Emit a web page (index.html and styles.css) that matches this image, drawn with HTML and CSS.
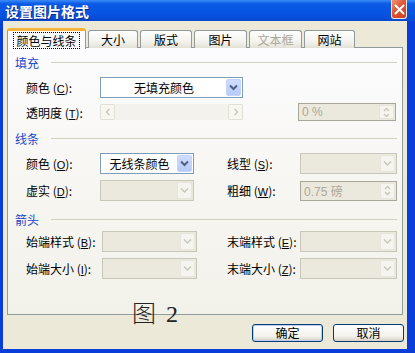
FILE: index.html
```html
<!DOCTYPE html>
<html lang="zh-CN">
<head>
    <meta charset="UTF-8">
    <title>设置图片格式</title>
    <link rel="stylesheet" href="styles.css">
</head>
<body>
    <div class="window">
        <div class="titlebar">
            <span class="title">设置图片格式</span>
            <span class="close-btn">
                <svg width="11" height="11" viewBox="0 0 11 11"><path d="M1.5 1.5 L9.5 9.5 M9.5 1.5 L1.5 9.5" stroke="#fff" stroke-width="2" stroke-linecap="round"/></svg>
            </span>
        </div>

        <div class="dialog">
            <div class="tabs">
                <div class="tab selected"><span class="focus">颜色与线条</span></div>
                <div class="tab w49">大小</div>
                <div class="tab w51">版式</div>
                <div class="tab w52">图片</div>
                <div class="tab w52 disabled">文本框</div>
                <div class="tab w50">网站</div>
            </div>

            <div class="panel">
                <div class="section-head head-fill"><span>填充</span></div>
                <div class="fill-grid">
                    <label>颜色 (<u>C</u>):</label>
                    <div class="combo">
                        <span class="value">无填充颜色</span>
                        <span class="drop"><svg width="9" height="7" viewBox="0 0 9 7"><path d="M1 1.5 L4.5 5 L8 1.5" fill="none" stroke="#4d6185" stroke-width="2"/></svg></span>
                    </div>
                    <label class="row2">透明度 (<u>T</u>):</label>
                    <div class="scroll row2">
                        <span class="sbtn"><svg width="6" height="8" viewBox="0 0 6 8"><path d="M4.5 1 L1.5 4 L4.5 7" fill="none" stroke="#c9c7ba" stroke-width="1.5"/></svg></span>
                        <span class="track"></span>
                        <span class="sbtn"><svg width="6" height="8" viewBox="0 0 6 8"><path d="M1.5 1 L4.5 4 L1.5 7" fill="none" stroke="#c9c7ba" stroke-width="1.5"/></svg></span>
                    </div>
                    <div class="spin spin-wide row2">
                        <span class="value">0 %</span>
                        <span class="spin-btns">
                            <svg width="7" height="5" viewBox="0 0 7 5"><path d="M1 4 L3.5 1.5 L6 4" fill="none" stroke="#c9c7ba" stroke-width="1.3"/></svg>
                            <svg width="7" height="5" viewBox="0 0 7 5"><path d="M1 1 L3.5 3.5 L6 1" fill="none" stroke="#c9c7ba" stroke-width="1.3"/></svg>
                        </span>
                    </div>
                </div>

                <div class="section-head head-line"><span>线条</span></div>
                <div class="line-grid">
                    <label>颜色 (<u>O</u>):</label>
                    <div class="combo">
                        <span class="value">无线条颜色</span>
                        <span class="drop"><svg width="9" height="7" viewBox="0 0 9 7"><path d="M1 1.5 L4.5 5 L8 1.5" fill="none" stroke="#4d6185" stroke-width="2"/></svg></span>
                    </div>
                    <label class="right-label">线型 (<u>S</u>):</label>
                    <div class="combo off">
                        <span class="value"></span>
                        <span class="drop"><svg width="9" height="7" viewBox="0 0 9 7"><path d="M1 1.5 L4.5 5 L8 1.5" fill="none" stroke="#c9c7ba" stroke-width="1.5"/></svg></span>
                    </div>
                    <label>虚实 (<u>D</u>):</label>
                    <div class="combo off">
                        <span class="value"></span>
                        <span class="drop"><svg width="9" height="7" viewBox="0 0 9 7"><path d="M1 1.5 L4.5 5 L8 1.5" fill="none" stroke="#c9c7ba" stroke-width="1.5"/></svg></span>
                    </div>
                    <label class="right-label">粗细 (<u>W</u>):</label>
                    <div class="spin">
                        <span class="value">0.75 磅</span>
                        <span class="spin-btns">
                            <svg width="7" height="5" viewBox="0 0 7 5"><path d="M1 4 L3.5 1.5 L6 4" fill="none" stroke="#c9c7ba" stroke-width="1.3"/></svg>
                            <svg width="7" height="5" viewBox="0 0 7 5"><path d="M1 1 L3.5 3.5 L6 1" fill="none" stroke="#c9c7ba" stroke-width="1.3"/></svg>
                        </span>
                    </div>
                </div>

                <div class="section-head head-arrow"><span>箭头</span></div>
                <div class="arrow-grid">
                    <label>始端样式 (<u>B</u>):</label>
                    <div class="combo off">
                        <span class="value"></span>
                        <span class="drop"><svg width="9" height="7" viewBox="0 0 9 7"><path d="M1 1.5 L4.5 5 L8 1.5" fill="none" stroke="#c9c7ba" stroke-width="1.5"/></svg></span>
                    </div>
                    <label class="right-label">末端样式 (<u>E</u>):</label>
                    <div class="combo off">
                        <span class="value"></span>
                        <span class="drop"><svg width="9" height="7" viewBox="0 0 9 7"><path d="M1 1.5 L4.5 5 L8 1.5" fill="none" stroke="#c9c7ba" stroke-width="1.5"/></svg></span>
                    </div>
                    <label>始端大小 (<u>I</u>):</label>
                    <div class="combo off">
                        <span class="value"></span>
                        <span class="drop"><svg width="9" height="7" viewBox="0 0 9 7"><path d="M1 1.5 L4.5 5 L8 1.5" fill="none" stroke="#c9c7ba" stroke-width="1.5"/></svg></span>
                    </div>
                    <label class="right-label">末端大小 (<u>Z</u>):</label>
                    <div class="combo off">
                        <span class="value"></span>
                        <span class="drop"><svg width="9" height="7" viewBox="0 0 9 7"><path d="M1 1.5 L4.5 5 L8 1.5" fill="none" stroke="#c9c7ba" stroke-width="1.5"/></svg></span>
                    </div>
                </div>
            </div>

            <div class="buttons">
                <button>确定</button>
                <button>取消</button>
            </div>

            <!-- caption pasted over the dialog -->
            <div class="caption">图 2</div>
        </div>
    </div>
</body>
</html>
```

FILE: styles.css
```css
* {
    box-sizing: border-box;
}

body {
    margin: 0;
    width: 415px;
    height: 353px;
    overflow: hidden;
    background: #0a3ed8;
    font-family: "Noto Sans CJK SC", "Liberation Sans", sans-serif;
    font-size: 12px;
    color: #000;
}

.window {
    display: flex;
    flex-direction: column;
    height: 353px;
}

.titlebar {
    height: 21px;
    display: flex;
    align-items: center;
    justify-content: space-between;
    padding: 0 8px 0 5px;
    background: linear-gradient(#3b8cf5, #0a5ae6 18%, #0653e0 70%, #0449d0);
}

.title {
    color: #fff;
    font-weight: bold;
    font-size: 14px;
    text-shadow: 1px 1px 0 #0b2a8a;
}

.close-btn {
    width: 16px;
    height: 19px;
    align-self: flex-start;
    border: 1px solid #f3e4dc;
    border-top: none;
    border-radius: 0 0 3px 3px;
    background: linear-gradient(135deg, #f09478, #de5535 45%, #c8421f);
    display: flex;
    align-items: center;
    justify-content: center;
}

.dialog {
    position: relative;
    flex: 1;
    margin: 0 8px 4px 3px;
    padding: 7px 3px 7px 4px;
    background: #ece9d8;
    display: flex;
    flex-direction: column;
}

/* tabs */
.tabs {
    display: flex;
    align-items: flex-end;
    height: 20px;
    position: relative;
    z-index: 2;
}

.tab {
    height: 18px;
    margin-left: 2px;
    border: 1px solid #919b9c;
    border-bottom: none;
    border-radius: 3px 3px 0 0;
    background: linear-gradient(#fefefe, #f4f3ee 60%, #e3e1d6);
    display: flex;
    align-items: center;
    justify-content: center;
    font-size: 12px;
    line-height: 1;
}

.tab.w49 { width: 50px; margin-left: 2px; }
.tab.w51 { width: 52px; }
.tab.w52 { width: 53px; margin-left: 2px; }
.tab.w50 { width: 51px; margin-left: 2px; }

.tab.disabled {
    color: #aca899;
}

.tab.selected {
    width: 79px;
    height: 21px;
    margin-left: 0;
    margin-bottom: -1px;
    border-top: 3px solid #f7b43a;
    background: #fcfcfe;
}

.focus {
    border: 1px dotted #000;
    padding: 2px 2px 1px;
}

/* main page */
.panel {
    height: 268px;
    margin-top: -1px;
    margin-right: 1px;
    border: 1px solid #919b9c;
    background: linear-gradient(#fcfcfe, #f6f5f0 60%, #f2f1ea);
}

.section-head {
    display: flex;
    align-items: center;
    height: 14px;
    padding-left: 7px;
    padding-right: 5px;
    color: #1b47c9;
}

.section-head::after {
    content: "";
    flex: 1;
    height: 1px;
    margin-left: 12px;
    background: #d0d0bf;
}

.head-fill { margin-top: 7px; }
.head-line { margin-top: 10px; }
.head-arrow { margin-top: 11px; }

label {
    white-space: nowrap;
    padding-left: 1px;
}

label u {
    text-decoration: underline;
    font-family: "Liberation Sans", sans-serif;
    font-size: 11px;
}

.fill-grid,
.line-grid,
.arrow-grid {
    display: grid;
    align-items: center;
    margin-left: 17px;
}

.fill-grid {
    grid-template-columns: 75px 143px 55px 98px;
    grid-template-rows: 21px 18px;
    row-gap: 5px;
    margin-top: 8px;
}

.fill-grid .row2 { grid-row: 2; }
.fill-grid .spin-wide { grid-column: 4; }

.line-grid {
    grid-template-columns: 75px 94px 32px 74px 97px;
    grid-template-rows: 21px 21px;
    row-gap: 6px;
    margin-top: 8px;
}

.arrow-grid {
    grid-template-columns: 77px 95px 29px 74px 97px;
    grid-template-rows: 21px 21px;
    row-gap: 6px;
    margin-top: 5px;
}

.right-label {
    grid-column: 4;
}

/* controls */
.combo {
    height: 21px;
    border: 1px solid #7f9db9;
    background: #fff;
    display: flex;
    padding: 1px;
}

.combo .value {
    flex: 1;
    display: flex;
    align-items: center;
    justify-content: center;
    font-size: 12px;
}

.drop {
    width: 15px;
    border-radius: 2px;
    background: linear-gradient(#cfdcfd, #b6cbf8);
    border: 1px solid #c3d3fd;
    display: flex;
    align-items: center;
    justify-content: center;
}

.combo.off {
    border-color: #c9c7ba;
    background: #ebe9dd;
}

.combo.off .drop {
    background: #f5f4ee;
    border-color: #e8e6dc;
}

.scroll {
    height: 16px;
    display: flex;
    background: #f3f2ec;
}

.sbtn {
    width: 15px;
    border: 1px solid #e2e0d6;
    border-radius: 2px;
    background: #f7f6f1;
    display: flex;
    align-items: center;
    justify-content: center;
}

.track {
    flex: 1;
}

.spin {
    height: 20px;
    border: 1px solid #a9a79c;
    background: #ebe9dd;
    display: flex;
    padding: 1px;
    color: #aca899;
}

.spin-wide {
    height: 18px;
}

.spin .value {
    flex: 1;
    display: flex;
    align-items: center;
    padding-left: 2px;
    font-family: "Liberation Sans", "Noto Sans CJK SC", sans-serif;
    font-size: 12px;
}

.spin-btns {
    width: 15px;
    background: #f5f4ee;
    border: 1px solid #e8e6dc;
    border-radius: 2px;
    display: flex;
    flex-direction: column;
    align-items: center;
    justify-content: center;
    gap: 1px;
}

/* bottom buttons */
.buttons {
    display: flex;
    justify-content: flex-end;
    gap: 10px;
    margin-top: 9px;
}

button {
    width: 71px;
    height: 18px;
    padding: 0;
    border: 1px solid #003c74;
    border-radius: 3px;
    background: linear-gradient(#ffffff, #f3f2ed 70%, #d6d0c5);
    font-family: "Noto Sans CJK SC", sans-serif;
    font-size: 12px;
    line-height: 1;
    color: #000;
}

button:first-child {
    box-shadow: inset 0 0 0 1px #b7cdf4;
}

.caption {
    position: absolute;
    left: 129px;
    top: 273px;
    font-family: "Liberation Serif", "Noto Sans CJK SC", serif;
    font-size: 24px;
    font-weight: 300;
    color: #222;
    letter-spacing: 2px;
}
```
